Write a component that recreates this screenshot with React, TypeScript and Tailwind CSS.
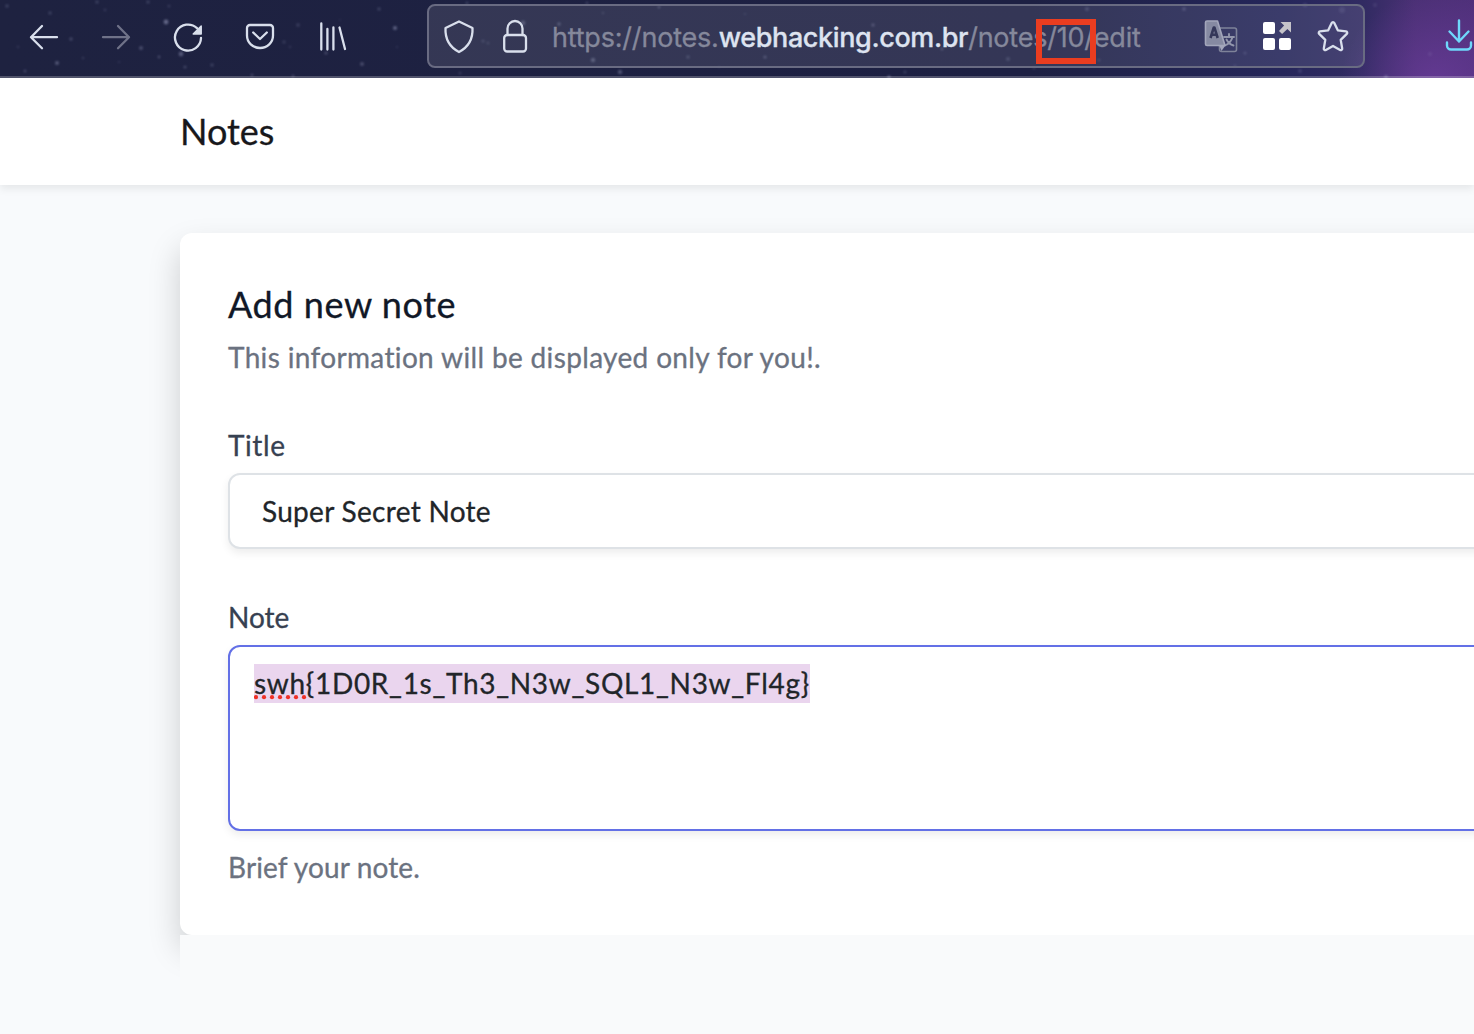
import React from "react";

const stars: [number, number, number, number][] = [
  [7, 6, 1.8, 0.25], [50, 13, 1.8, 0.25], [97, 2, 1.8, 0.25], [105, 10, 1.4, 0.2], [148, 2, 1.8, 0.25],
  [169, 6, 1.6, 0.2], [166, 22, 2.4, 0.6], [71, 39, 1.8, 0.3], [141, 48, 2, 0.35], [57, 63, 2, 0.45],
  [25, 71, 1.5, 0.3], [18, 47, 1.4, 0.15], [83, 58, 1.3, 0.2], [159, 57, 1.4, 0.35], [181, 54, 2.4, 0.45],
  [185, 67, 1.6, 0.3], [212, 65, 1.8, 0.25], [119, 62, 1.3, 0.15], [284, 42, 1.8, 0.2], [290, 47, 1.4, 0.15],
  [298, 25, 2, 0.2], [326, 53, 1.6, 0.35], [362, 64, 2, 0.35], [379, 9, 1.8, 0.25], [395, 28, 2, 0.55],
  [397, 47, 1.2, 0.15], [252, 75, 1.5, 0.3], [293, 76, 1.5, 0.3], [340, 20, 1.2, 0.1], [467, 3, 1.6, 0.25],
  [483, 41, 1.5, 0.25], [488, 43, 1.5, 0.2], [523, 23, 2.4, 0.35], [559, 24, 1.8, 0.35], [593, 60, 2.2, 0.4],
  [620, 72, 2.2, 0.4], [460, 73, 1.6, 0.2], [587, 3, 1.5, 0.25], [603, 13, 1.3, 0.2], [659, 7, 1.5, 0.3],
  [688, 57, 1.8, 0.25], [765, 57, 1.6, 0.35], [719, 67, 1.2, 0.15], [745, 14, 1.3, 0.15], [873, 25, 1.8, 0.3],
  [889, 77, 1.6, 0.6], [905, 72, 1.6, 0.25], [942, 49, 1.5, 0.3], [1008, 59, 2, 0.25], [1034, 68, 1.5, 0.2],
  [1087, 9, 2, 0.25], [1099, 60, 1.5, 0.2], [1123, 44, 1.3, 0.15], [1184, 9, 1.8, 0.3], [1245, 53, 1.5, 0.25],
  [1235, 66, 1.4, 0.2], [1305, 5, 2, 0.25], [1342, 10, 3, 0.15], [1300, 71, 2, 0.2], [1375, 5, 2, 0.15],
  [1430, 54, 2, 0.15], [1386, 77, 2, 0.4],
];

function Sky() {
  return (
    <svg className="absolute inset-0" width="1474" height="78" viewBox="0 0 1474 78" aria-hidden="true">
      <defs>
        <linearGradient id="night" x1="0" x2="1474" y1="0" y2="0" gradientUnits="userSpaceOnUse">
          <stop offset="0" stopColor="#1e2240" />
          <stop offset="0.7" stopColor="#1d2043" />
          <stop offset="0.87" stopColor="#25265a" />
          <stop offset="0.925" stopColor="#312b62" />
          <stop offset="0.96" stopColor="#4a3074" />
          <stop offset="1" stopColor="#4f307a" />
        </linearGradient>
        <radialGradient id="glow" cx="1435" cy="86" r="95" gradientUnits="userSpaceOnUse">
          <stop offset="0" stopColor="#7440a6" stopOpacity="0.6" />
          <stop offset="1" stopColor="#7440a6" stopOpacity="0" />
        </radialGradient>
        <filter id="soft" x="-100%" y="-100%" width="300%" height="300%">
          <feGaussianBlur stdDeviation="0.9" />
        </filter>
      </defs>
      <rect width="1474" height="78" fill="url(#night)" />
      <rect width="1474" height="78" fill="url(#glow)" />
      <g filter="url(#soft)" fill="#b9bde0" opacity="0.75">
        {stars.map(([x, y, r, o]) => (
          <circle key={`${x}-${y}`} cx={x} cy={y} r={r} opacity={o} />
        ))}
      </g>
      <rect y="76" width="1474" height="2" fill="#fff" fillOpacity="0.23" />
    </svg>
  );
}

function Icon({ children, w = "w-[72px]" }: { children: React.ReactNode; w?: string }) {
  return (
    <span className={`flex shrink-0 items-center justify-center ${w}`}>
      <svg width="36" height="36" viewBox="0 0 36 36" fill="none" stroke="#d9dfec" strokeWidth="2.3" strokeLinecap="round" strokeLinejoin="round">
        {children}
      </svg>
    </span>
  );
}

function Toolbar() {
  return (
    <nav className="relative h-[78px] w-[1474px] overflow-hidden">
      <Sky />
      <div className="relative flex h-[72px] items-stretch pl-2">
        <Icon>
          <path d="M31 19.200H5M16 8 5 19.200l11 11" />
        </Icon>
        <Icon>
          <g stroke="#6f7288">
            <path d="M5 19.200h26M20 8l11 11.200-11 11" />
          </g>
        </Icon>
        <Icon>
          <path d="M31 20a13 13 0 1 1-4-9.800" />
          <path d="M31.200 8v8h-8z" fill="#d9dfec" strokeWidth="1.500" />
        </Icon>
        <Icon>
          <path d="M8 7h20a3 3 0 0 1 3 3v7.500c0 7-5.700 12.500-13 12.500S5 24.500 5 17.500V10a3 3 0 0 1 3-3z" />
          <path d="m11.200 14.500 6.800 6.500 6.800-6.500" />
        </Icon>
        <Icon>
          <path d="M7.300 5.500v26M13.400 11v20.500M19.400 9.500v22M25.500 9.500l5.500 21.500" />
        </Icon>

        <div className="relative mt-1 ml-[59px] flex h-16 w-[938px] shrink-0 items-stretch rounded-lg border-2 border-[#696b82] bg-white/10 pr-0.5 pl-0.5">
          <Icon w="w-14">
            <path d="M18 3.500 31.500 10c.5 11-4 19-13.500 24C8.500 29 4 21 4.500 10z" />
          </Icon>
          <Icon w="w-14">
            <path d="M10.500 17v-6.500a7.500 7.500 0 0 1 15 0V17" />
            <rect x="7.200" y="17" width="21.800" height="16.500" rx="3" />
          </Icon>
          <p className="ml-2 flex grow items-center whitespace-nowrap pt-[3px] pl-px font-['Inter',sans-serif] text-[27px] text-[#85889b]">
            <span className="tracking-[-0.2px]">https://notes.</span>
            <span className="font-medium tracking-[-0.38px] text-[#dde3f0]">webhacking.com.br</span>
            <span className="tracking-[-0.22px]">/notes/10/edit</span>
          </p>
          <Icon w="w-14">
            <g stroke="#7e8299" strokeWidth="1.600">
              <path d="M17 10h14.500a2 2 0 0 1 2 2v19.500a2 2 0 0 1-2 2h-13a2 2 0 0 1-2-2V27" />
              <path d="M21 19h10M26 16v3M29.500 19c-1 4-4 7-7.500 8.500M23.500 21.500c1.500 3 3.500 5 7 6" stroke="#9296ac" strokeWidth="1.900" />
              <path d="M4 3h10.500l7.500 24.500H4a1.500 1.500 0 0 1-1.500-1.500V4.500A1.500 1.500 0 0 1 4 3z" fill="#868aa2" stroke="#a3a6bb" />
              <path d="M16.500 28h5.500l-3.500 5z" fill="#a3a6bb" stroke="none" />
              <path d="m7.500 20 3.300-10.500h.6L14.700 20M8.500 16.800h5.200" stroke="#34375a" strokeWidth="2.600" strokeLinecap="butt" />
            </g>
          </Icon>
          <Icon w="w-14">
            <g fill="#fff" stroke="none">
              <rect x="4" y="4" width="12" height="12" rx="2" />
              <rect x="4" y="20" width="12" height="12" rx="2" />
              <rect x="20" y="20" width="12" height="12" rx="2" />
              <path d="M21.500 4H32v10.500l-3.600-3.600-5.300 5.100-3.100-3.100 5.100-5.300z" fill="#c5c3c9" />
            </g>
          </Icon>
          <Icon w="w-14">
            <path d="M16.700 5c.5-1.100 2.100-1.100 2.600 0l3.500 7.300 8.200 1.100c1.200.2 1.700 1.600.8 2.500l-6.100 6 1.500 8.600c.2 1.200-1 2.100-2.100 1.500L18 28l-7.100 4c-1.100.6-2.300-.3-2.100-1.500l1.500-8.600-6.100-6c-.9-.9-.4-2.300.8-2.500l8.200-1.100z" />
          </Icon>
          <div className="absolute top-[13px] left-[607px] h-[45px] w-[60px] border-[6px] border-[#ea3d20]" />
        </div>
        <div className="ml-[58px] flex">
          <Icon w="w-[72px]">
            <g stroke="#6fd8fb" strokeWidth="2.400">
              <path d="M18 2.500v21M8.500 13.500l9.500 10 9.500-10" />
              <path d="M6 24.500v3a4 4 0 0 0 4 4h16a4 4 0 0 0 4-4v-3" />
            </g>
          </Icon>
        </div>
      </div>
    </nav>
  );
}

export default function App() {
  return (
    <div className="h-[1034px] w-[1474px] overflow-hidden bg-[#f8fafc] font-['Lato',sans-serif] text-[28px] leading-10 [-webkit-text-stroke:0.3px]">
      <Toolbar />
      <header className="relative h-[107px] bg-white pt-[29px] pl-[180px] shadow-[0_4px_8px_rgba(0,0,0,0.075)]">
        <h1 className="text-4xl leading-[48px] text-[#18181b]">Notes</h1>
      </header>

      <main className="mt-12 ml-[180px] w-[1500px]">
        <section className="h-[702px] rounded-xl bg-white px-12 pt-[47px] shadow-[0_16px_32px_rgba(0,0,0,0.18)]">
          <h2 className="text-4xl leading-[48px] tracking-[0.58px] text-[#111827]">Add new note</h2>
          <p className="mt-[9px] tracking-[0.35px] text-[#6b7280]">This information will be displayed only for you!.</p>

          <label className="mt-12 block tracking-[0.6px] text-[#374151]">Title</label>
          <div className="mt-2 flex h-[76px] items-center rounded-xl border-2 border-[#dee2e6] bg-white pl-8 tracking-[0.3px] text-[#212529] shadow-[0_4px_8px_rgba(0,0,0,0.075)]">
            Super Secret Note
          </div>

          <label className="mt-12 block text-[#374151]">Note</label>
          <div className="mt-2 h-[186px] rounded-xl border-2 border-[#6370e6] bg-white pt-[17px] pl-6 text-[#212529] shadow-[0_4px_8px_rgba(0,0,0,0.075)]">
            <div className="relative h-[39px] w-[556px] bg-[#ead5ee] leading-[39px] tracking-[0.7px] whitespace-nowrap">
              swh{"{1D0R_1s_Th3_N3w_SQL1_N3w_Fl4g}"}
              <svg className="absolute top-[31px] left-0" width="56" height="5" viewBox="0 0 56 5" fill="#ef3127">
                {[2, 10, 18, 26, 34, 42, 50].map((x) => (
                  <circle key={x} cx={x} cy="2.200" r="2.1" />
                ))}
              </svg>
            </div>
          </div>
          <p className="mt-4 tracking-[0.12px] text-[#6b7280]">Brief your note.</p>
        </section>
        <div className="relative h-[120px] bg-[#f9fafb]" />
      </main>
    </div>
  );
}
